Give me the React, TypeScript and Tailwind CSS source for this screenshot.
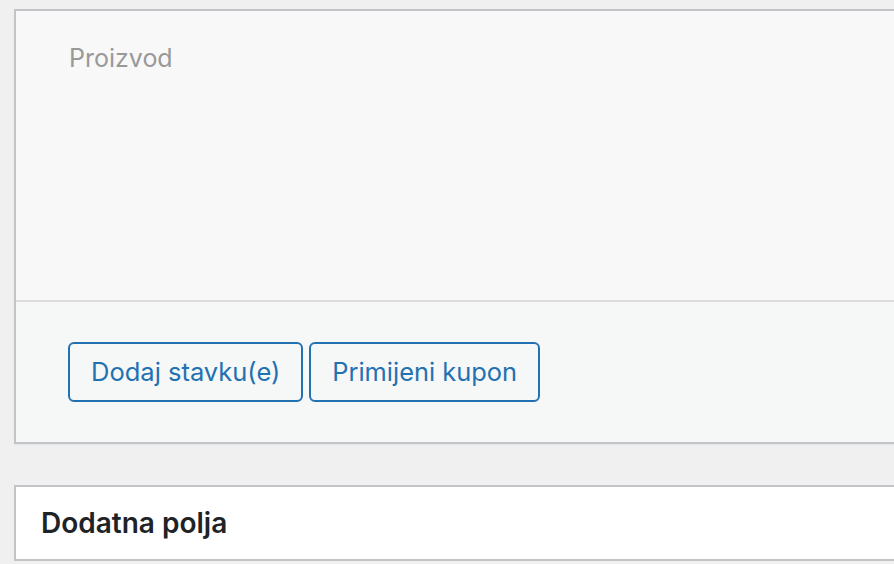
export default function App() {
  return (
    <div
      className="min-h-[564px] w-[894px] overflow-hidden bg-[#f0f0f1] pl-[14px] pt-[9px]"
      style={{ fontFamily: "Inter, 'Noto Sans', sans-serif" }}
    >
      <div className="w-[900px] border-2 border-r-0 border-[#c3c4c7] bg-[#f8f8f8] shadow-[0_1px_1px_rgba(0,0,0,0.04)]">
        <div className="h-[289px] pl-[53px] pt-[29px]">
          <span className="text-[25px] text-[#999999]">Proizvod</span>
        </div>
        <div className="h-[2px] bg-[#dcdcde]" />
        <div className="flex gap-[6px] bg-[#f6f7f7] pb-[40px] pl-[52px] pt-[40px]">
          <button className="h-[60px] rounded-[6px] border-2 border-[#2271b1] bg-[#f6f7f7] px-[21px] text-[25.5px] text-[#2271b1]">
            Dodaj stavku(e)
          </button>
          <button className="h-[60px] rounded-[6px] border-2 border-[#2271b1] bg-[#f6f7f7] px-[21px] text-[25.4px] text-[#2271b1]">
            Primijeni kupon
          </button>
        </div>
      </div>
      <div className="mt-[41px] flex h-[76px] w-[900px] items-center border-2 border-r-0 border-[#c3c4c7] bg-white pl-[25px]">
        <h2 className="text-[28px] font-semibold text-[#1d2327]">Dodatna polja</h2>
      </div>
    </div>
  );
}
